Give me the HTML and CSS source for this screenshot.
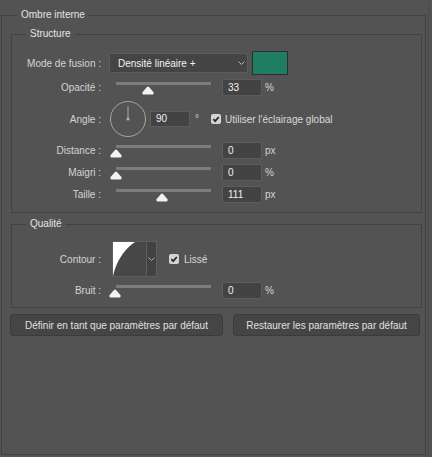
FILE: index.html
```html
<!DOCTYPE html>
<html lang="fr">
<head>
<meta charset="utf-8">
<title>Ombre interne</title>
<link rel="stylesheet" href="styles.css">
</head>
<body>
<div class="panel">
  <fieldset class="group group-outer">
    <legend class="legend legend-outer">Ombre interne</legend>

    <fieldset class="group group-inner group-structure">
      <legend class="legend legend-inner">Structure</legend>

      <div class="row row-mode">
        <span class="label">Mode de fusion :</span>
        <div class="select">
          <span class="select-text">Densité linéaire +</span>
          <svg class="chevron" width="7" height="4" viewBox="0 0 7 4"><path d="M0.5 0.5 L3.5 3.5 L6.5 0.5" fill="none" stroke="#b4b4b4" stroke-width="1"/></svg>
        </div>
        <div class="swatch"></div>
      </div>

      <div class="row row-slider row-first">
        <span class="label">Opacité :</span>
        <div class="slider">
          <div class="track"></div>
          <svg class="thumb" style="left:26px" width="12" height="9" viewBox="0 0 12 9"><path d="M6 0.5 C6.4 0.5 6.7 0.7 7 1 L11.4 6 C12 6.9 11.6 8.5 10.4 8.5 H1.6 C0.4 8.5 0 6.9 0.6 6 L5 1 C5.3 0.7 5.6 0.5 6 0.5 Z" fill="#f2f2f2"/></svg>
        </div>
        <div class="num">33</div>
        <span class="unit">%</span>
      </div>

      <div class="row row-angle">
        <span class="label">Angle :</span>
        <svg class="dial" width="36" height="36" viewBox="0 0 36 36">
          <circle cx="18" cy="18" r="17.5" fill="none" stroke="#a6a6a6" stroke-width="1"/>
          <line x1="18" y1="18" x2="18" y2="5" stroke="#a6a6a6" stroke-width="1"/>
          <circle cx="18" cy="18" r="1.5" fill="#b0b0b0"/>
        </svg>
        <div class="num num-angle">90</div>
        <span class="deg">°</span>
        <span class="check"><svg width="10" height="10" viewBox="0 0 10 10"><path d="M2.3 5.2 L4.2 7.1 L7.8 3" fill="none" stroke="#2a2a2a" stroke-width="1.8"/></svg></span>
        <span class="check-label">Utiliser l'éclairage global</span>
      </div>

      <div class="row row-slider">
        <span class="label">Distance :</span>
        <div class="slider">
          <div class="track"></div>
          <svg class="thumb" style="left:-6px" width="12" height="9" viewBox="0 0 12 9"><path d="M6 0.5 C6.4 0.5 6.7 0.7 7 1 L11.4 6 C12 6.9 11.6 8.5 10.4 8.5 H1.6 C0.4 8.5 0 6.9 0.6 6 L5 1 C5.3 0.7 5.6 0.5 6 0.5 Z" fill="#f2f2f2"/></svg>
        </div>
        <div class="num">0</div>
        <span class="unit">px</span>
      </div>

      <div class="row row-slider">
        <span class="label">Maigri :</span>
        <div class="slider">
          <div class="track"></div>
          <svg class="thumb" style="left:-6px" width="12" height="9" viewBox="0 0 12 9"><path d="M6 0.5 C6.4 0.5 6.7 0.7 7 1 L11.4 6 C12 6.9 11.6 8.5 10.4 8.5 H1.6 C0.4 8.5 0 6.9 0.6 6 L5 1 C5.3 0.7 5.6 0.5 6 0.5 Z" fill="#f2f2f2"/></svg>
        </div>
        <div class="num">0</div>
        <span class="unit">%</span>
      </div>

      <div class="row row-slider">
        <span class="label">Taille :</span>
        <div class="slider">
          <div class="track"></div>
          <svg class="thumb" style="left:40px" width="12" height="9" viewBox="0 0 12 9"><path d="M6 0.5 C6.4 0.5 6.7 0.7 7 1 L11.4 6 C12 6.9 11.6 8.5 10.4 8.5 H1.6 C0.4 8.5 0 6.9 0.6 6 L5 1 C5.3 0.7 5.6 0.5 6 0.5 Z" fill="#f2f2f2"/></svg>
        </div>
        <div class="num">111</div>
        <span class="unit">px</span>
      </div>
    </fieldset>

    <fieldset class="group group-inner group-quality">
      <legend class="legend legend-inner">Qualité</legend>

      <div class="row row-contour">
        <span class="label">Contour :</span>
        <div class="contour">
          <svg class="contour-preview" width="33" height="34" viewBox="0 0 33 34">
            <rect width="33" height="34" fill="#474747"/>
            <path d="M0 34 L0 0 L22 0 C14 5 4 16 0 34 Z" fill="#ffffff"/>
          </svg>
          <div class="contour-drop">
            <svg width="7" height="4" viewBox="0 0 7 4"><path d="M0.5 0.5 L3.5 3.5 L6.5 0.5" fill="none" stroke="#a8a8a8" stroke-width="1"/></svg>
          </div>
        </div>
        <span class="check check-smooth"><svg width="10" height="10" viewBox="0 0 10 10"><path d="M2.3 5.2 L4.2 7.1 L7.8 3" fill="none" stroke="#2a2a2a" stroke-width="1.8"/></svg></span>
        <span class="check-label">Lissé</span>
      </div>

      <div class="row row-slider row-noise">
        <span class="label">Bruit :</span>
        <div class="slider">
          <div class="track"></div>
          <svg class="thumb" style="left:-7px" width="12" height="9" viewBox="0 0 12 9"><path d="M6 0.5 C6.4 0.5 6.7 0.7 7 1 L11.4 6 C12 6.9 11.6 8.5 10.4 8.5 H1.6 C0.4 8.5 0 6.9 0.6 6 L5 1 C5.3 0.7 5.6 0.5 6 0.5 Z" fill="#f2f2f2"/></svg>
        </div>
        <div class="num">0</div>
        <span class="unit">%</span>
      </div>
    </fieldset>

    <div class="buttons">
      <button class="btn btn-default">Définir en tant que paramètres par défaut</button>
      <button class="btn btn-restore">Restaurer les paramètres par défaut</button>
    </div>
  </fieldset>
</div>
</body>
</html>
```
FILE: styles.css
```css
html, body {
  margin: 0;
  padding: 0;
}

body {
  width: 432px;
  height: 457px;
  overflow: hidden;
  background: #535353;
  font-family: "Liberation Sans", Arial, sans-serif;
  font-size: 10px;
  color: #d4d4d4;
}

.panel {
  box-sizing: border-box;
  height: 457px;
  width: 429px;
  padding: 8px 0 0 1px;
  border-right: 1px solid #4a4a4a;
}

.group {
  margin: 0;
  min-width: 0;
  border: 1px solid #424242;
}

.legend {
  padding: 0 4px;
  line-height: 14px;
  color: #e4e4e4;
}

.group-outer {
  box-sizing: border-box;
  width: 425px;
  height: 447px;
  padding: 0 3px 0 9px;
}

.legend-outer {
  margin-left: 6px;
}

.group-inner {
  padding: 0;
}

.legend-inner {
  margin-left: 14px;
}

.group-structure {
  margin-top: 5px;
  padding-bottom: 9px;
}

.group-quality {
  margin-top: 4px;
  padding-bottom: 8px;
}

.row {
  display: flex;
  align-items: center;
}

.label {
  flex: none;
  width: 89px;
  text-align: right;
  white-space: nowrap;
}

/* Mode row */
.row-mode {
  margin-top: 10px;
  height: 24px;
}

.select {
  flex: none;
  box-sizing: border-box;
  display: flex;
  align-items: center;
  width: 139px;
  height: 20px;
  margin-left: 8px;
  padding: 0 2px 0 8px;
  background: #444444;
  border: 1px solid #5c5c5c;
  border-radius: 2px;
  color: #f2f2f2;
}

.select-text {
  flex: 1;
  white-space: nowrap;
}

.chevron {
  flex: none;
}

.swatch {
  flex: none;
  box-sizing: border-box;
  width: 36px;
  height: 24px;
  margin-left: 4px;
  background: #1f7e61;
  border: 1px solid #2e2e2e;
}

/* Slider rows */
.row-slider {
  height: 17px;
  margin-top: 5px;
}

.row-first {
  margin-top: 4px;
}

.slider {
  flex: none;
  position: relative;
  width: 95px;
  height: 17px;
  margin-left: 15px;
  align-self: flex-start;
}

.track {
  margin-top: 3px;
  height: 3px;
  background: #7c7c7c;
}

.thumb {
  position: absolute;
  top: 7px;
}

.num {
  flex: none;
  box-sizing: border-box;
  width: 40px;
  height: 17px;
  margin-left: 11px;
  padding-left: 5px;
  line-height: 15px;
  background: #434343;
  border: 1px solid #5c5c5c;
  color: #f0f0f0;
}

.unit {
  margin-left: 3px;
  color: #d4d4d4;
}

/* Angle row */
.row-angle {
  height: 36px;
  margin-top: 5px;
}

.dial {
  flex: none;
  margin-left: 9px;
}

.num-angle {
  margin-left: 4px;
  height: 16px;
  line-height: 14px;
}

.deg {
  flex: none;
  width: 16px;
  margin-left: 5px;
  align-self: flex-start;
  margin-top: 12px;
}

.check {
  flex: none;
  display: flex;
  width: 10px;
  height: 10px;
  border-radius: 2px;
  background: #d4d4d4;
}

.check-label {
  margin-left: 4px;
  color: #dadada;
  white-space: nowrap;
}

/* Quality */
.row-contour {
  height: 36px;
  margin-top: 10px;
}

.contour {
  flex: none;
  box-sizing: border-box;
  display: flex;
  width: 45px;
  height: 36px;
  margin-left: 11px;
  background: #424242;
  border: 1px solid #5e5e5e;
}

.contour-preview {
  flex: none;
  display: block;
}

.contour-drop {
  flex: 1;
  display: flex;
  align-items: center;
  justify-content: center;
  border-left: 1px solid #5e5e5e;
}

.check-smooth {
  margin-left: 12px;
}

.check-smooth + .check-label {
  margin-left: 5px;
}

.row-noise {
  margin-top: 5px;
}

/* Buttons */
.buttons {
  display: flex;
  margin: 6px 0 0 -1px;
}

.btn {
  box-sizing: border-box;
  height: 22px;
  padding: 0;
  background: #454545;
  border: 1px solid #3b3b3b;
  border-radius: 3px;
  color: #e0e0e0;
  font-family: "Liberation Sans", Arial, sans-serif;
  font-size: 10px;
  white-space: nowrap;
}

.btn-default {
  width: 213px;
}

.btn-restore {
  width: 187px;
  margin-left: 10px;
}
```
